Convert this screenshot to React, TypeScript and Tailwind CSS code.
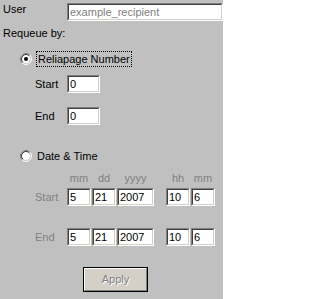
import React from "react";

const Radio: React.FC<{ checked?: boolean }> = ({ checked }) => (
  <svg width="12" height="12" viewBox="0 0 12 12" className="shrink-0">
    <circle cx="6" cy="6" r="4" fill="#ffffff" />
    <path d="M2.11 9.89 A5.5 5.5 0 0 1 9.89 2.11" fill="none" stroke="#808080" />
    <path d="M9.89 2.11 A5.5 5.5 0 0 1 2.11 9.89" fill="none" stroke="#ffffff" />
    <path d="M2.82 9.18 A4.5 4.5 0 0 1 9.18 2.82" fill="none" stroke="#404040" />
    <path d="M9.18 2.82 A4.5 4.5 0 0 1 2.82 9.18" fill="none" stroke="#d4d0c8" />
    {checked && <circle cx="6" cy="6" r="2" fill="#000000" />}
  </svg>
);

interface FieldProps {
  value: string;
  width: string;
  muted?: boolean;
}

const Field: React.FC<FieldProps> = ({ value, width, muted }) => (
  <div className={`${width} h-[18px] border border-t-[#808080] border-l-[#808080] border-b-white border-r-white shrink-0`}>
    <input
      defaultValue={value}
      className={`w-full h-full block bg-white border border-t-[#404040] border-l-[#404040] border-b-[#d4d0c8] border-r-[#d4d0c8] px-[1px] outline-none ${
        muted ? "text-[#808080]" : "text-black"
      }`}
    />
  </div>
);

const DateRow: React.FC<{ label: string }> = ({ label }) => (
  <div className="flex items-center h-[18px]">
    <span className="w-[32px] pl-[35px] box-content text-[#808080] -ml-0">{label}</span>
    <div className="flex gap-[1px]">
      <Field value="5" width="w-[24px]" />
      <Field value="21" width="w-[24px]" />
      <Field value="2007" width="w-[37px]" />
    </div>
    <div className="flex gap-[1px] ml-[12px]">
      <Field value="10" width="w-[24px]" />
      <Field value="6" width="w-[24px]" />
    </div>
  </div>
);

export default function App() {
  return (
    <div className="w-[223px] h-[299px] overflow-hidden bg-[#c0c0c0] text-black font-['Liberation_Sans',Arial,sans-serif] text-[11px] leading-[13px] pt-[3px]">
      <div className="flex items-start pl-[3px]">
        <span className="w-[64px]">User</span>
        <Field value="example_recipient" width="w-[156px]" muted />
      </div>

      <div className="pl-[3px] mt-[6px]">Requeue by:</div>

      <div className="flex items-center h-[16px] mt-[11px] pl-[20px] gap-[4px]">
        <Radio checked />
        <span className="border border-dotted border-black px-[1px] leading-[14px]">Reliapage Number</span>
      </div>

      <div className="flex items-center mt-[8px] pl-[35px]">
        <span className="w-[32px]">Start</span>
        <Field value="0" width="w-[33px]" />
      </div>
      <div className="flex items-center mt-[14px] pl-[35px]">
        <span className="w-[32px]">End</span>
        <Field value="0" width="w-[33px]" />
      </div>

      <div className="flex items-center h-[16px] mt-[23px] pl-[20px] gap-[5px]">
        <Radio />
        <span>Date &amp; Time</span>
      </div>

      <div className="flex mt-[8px] pl-[67px] text-[#808080]">
        <div className="flex gap-[1px]">
          <span className="w-[24px] text-center">mm</span>
          <span className="w-[24px] text-center">dd</span>
          <span className="w-[37px] text-center">yyyy</span>
        </div>
        <div className="flex gap-[1px] ml-[12px]">
          <span className="w-[24px] text-center">hh</span>
          <span className="w-[24px] text-center">mm</span>
        </div>
      </div>

      <div className="mt-[3px]">
        <DateRow label="Start" />
      </div>
      <div className="mt-[22px]">
        <DateRow label="End" />
      </div>

      <div className="mt-[21px] pl-[83px]">
        <button
          disabled
          className="w-[65px] h-[25px] border border-black bg-[#d4d0c8] p-0 block"
        >
          <span className="flex items-center justify-center w-full h-full border border-t-white border-l-white border-b-[#808080] border-r-[#808080] text-[#808080] [text-shadow:1px_1px_0_#ffffff]">
            Apply
          </span>
        </button>
      </div>
    </div>
  );
}
